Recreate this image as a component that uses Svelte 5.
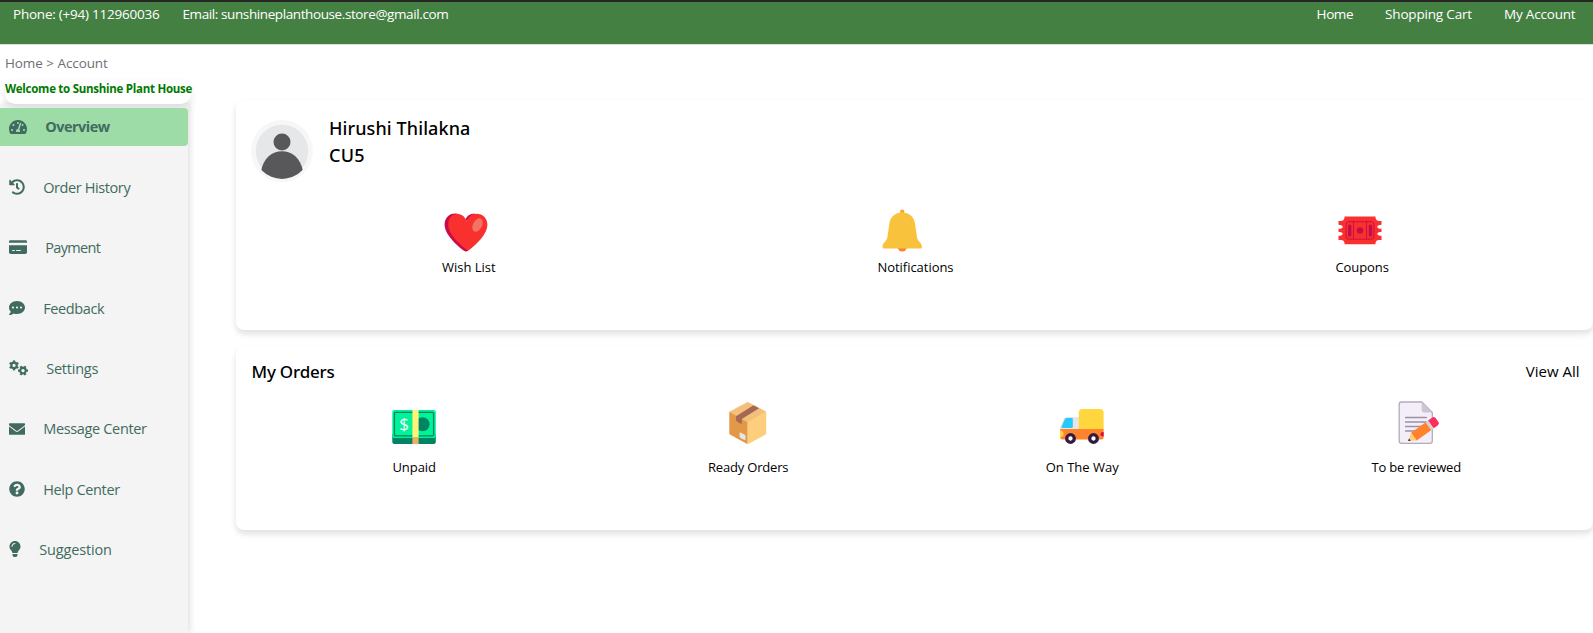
<script>
  const navItems = [
    { label: 'Overview', icon: 'gauge', width: 18, track: -0.51, active: true },
    { label: 'Order History', icon: 'history', width: 16, track: -0.4 },
    { label: 'Payment', icon: 'card', width: 18, track: -0.66 },
    { label: 'Feedback', icon: 'comment', width: 16, track: -0.39 },
    { label: 'Settings', icon: 'gears', width: 19, track: -0.22 },
    { label: 'Message Center', icon: 'mail', width: 16, track: -0.34 },
    { label: 'Help Center', icon: 'help', width: 16, track: -0.36 },
    { label: 'Suggestion', icon: 'bulb', width: 12, track: -0.15 }
  ];

  const shortcuts = [
    { label: 'Wish List', icon: 'heart', track: -0.02 },
    { label: 'Notifications', icon: 'bell', track: -0.04 },
    { label: 'Coupons', icon: 'coupon', track: -0.06 }
  ];

  const orders = [
    { label: 'Unpaid', icon: 'cash', track: -0.05 },
    { label: 'Ready Orders', icon: 'box', track: -0.18 },
    { label: 'On The Way', icon: 'truck', track: 0 },
    { label: 'To be reviewed', icon: 'memo', track: -0.18 }
  ];

  const glyphs = {
    gauge: {
      box: '0 0 576 512',
      d: 'M288 32C128.94 32 0 160.94 0 320c0 52.8 14.25 102.26 39.06 144.8 5.61 9.62 16.3 15.2 27.44 15.2h443c11.14 0 21.83-5.58 27.44-15.2C561.75 422.26 576 372.8 576 320c0-159.06-128.94-288-288-288zm0 64c14.71 0 26.58 10.13 30.32 23.65-1.11 2.26-2.64 4.23-3.45 6.67l-9.22 27.67c-5.13 3.49-10.97 6.01-17.64 6.01-17.67 0-32-14.33-32-32S270.33 96 288 96zM96 384c-17.67 0-32-14.33-32-32s14.33-32 32-32 32 14.33 32 32-14.33 32-32 32zm48-160c-17.67 0-32-14.33-32-32s14.33-32 32-32 32 14.33 32 32-14.33 32-32 32zm246.77-72.41l-61.33 184C343.13 347.33 352 364.54 352 384c0 11.72-3.38 22.55-8.88 32H232.88c-5.5-9.45-8.88-20.28-8.88-32 0-33.94 26.5-61.43 59.9-63.59l61.34-184.01c4.17-12.56 17.73-19.45 30.36-15.17 12.57 4.19 19.35 17.79 15.17 30.36zm14.66 57.2l15.52-46.55c3.47-1.29 7.13-2.23 11.05-2.23 17.67 0 32 14.33 32 32s-14.33 32-32 32c-11.38-.01-20.89-6.28-26.57-15.22zM480 384c-17.67 0-32-14.33-32-32s14.33-32 32-32 32 14.33 32 32-14.33 32-32 32z'
    },
    history: {
      box: '0 0 512 512',
      d: 'M504 255.531c.253 136.64-111.18 248.372-247.82 248.468-59.015.042-113.223-20.53-155.822-54.911-11.077-8.94-11.905-25.541-1.839-35.607l11.267-11.267c8.609-8.609 22.353-9.551 31.891-1.984C173.062 425.135 212.781 440 256 440c101.705 0 184-82.311 184-184 0-101.705-82.311-184-184-184-48.814 0-93.149 18.969-126.068 49.932l50.754 50.754c10.08 10.08 2.941 27.314-11.313 27.314H24c-8.837 0-16-7.163-16-16V38.627c0-14.254 17.234-21.393 27.314-11.314l49.372 49.372C129.209 34.136 189.552 8 256 8c136.81 0 247.747 110.78 248 247.531zm-180.912 78.784l9.823-12.63c8.138-10.463 6.253-25.542-4.21-33.679L288 256.349V152c0-13.255-10.745-24-24-24h-16c-13.255 0-24 10.745-24 24v135.651l65.409 50.874c10.463 8.137 25.541 6.253 33.679-4.21z'
    },
    card: {
      box: '0 0 576 512',
      d: 'M48 36C22 36 0 54 0 76v44H576V76c0-22-22-40-48-40H48zM576 196H0V424c0 31 25 56 56 56H520c31 0 56-25 56-56V196zM112 352h64c8.8 0 16 7.2 16 16s-7.2 16-16 16H112c-8.8 0-16-7.2-16-16s7.2-16 16-16zm112 16c0-8.8 7.2-16 16-16H368c8.8 0 16 7.2 16 16s-7.2 16-16 16H240c-8.8 0-16-7.2-16-16z'
    },
    comment: {
      box: '0 0 512 512',
      d: 'M256 32C114.6 32 0 125.1 0 240c0 49.6 21.4 95 57 130.7C44.5 421.1 2.7 466 2.2 466.5c-2.2 2.3-2.8 5.7-1.5 8.7S4.8 480 8 480c66.3 0 116-31.8 140.6-51.4 32.7 12.3 69 19.4 107.4 19.4 141.4 0 256-93.1 256-208S397.4 32 256 32zM128 272c-17.7 0-32-14.3-32-32s14.3-32 32-32 32 14.3 32 32-14.3 32-32 32zm128 0c-17.7 0-32-14.3-32-32s14.3-32 32-32 32 14.3 32 32-14.3 32-32 32zm128 0c-17.7 0-32-14.3-32-32s14.3-32 32-32 32 14.3 32 32-14.3 32-32 32z'
    },
    mail: {
      box: '0 0 512 512',
      d: 'M20 72Q0 72 0 92v28c0 12 7 22 19.2 30.400L236.800 313.600c11.400 8.500 27 8.500 38.400 0L492.800 150.400C505 142 512 132 512 120V92q0-20-20-20H20zM0 176V420q0 20 20 20H492q20 0 20-20V176L294.400 339.200c-22.800 17.100-54 17.100-76.800 0L0 176z'
    },
    help: {
      box: '0 0 512 512',
      d: 'M504 256c0 136.997-111.043 248-248 248S8 392.997 8 256C8 119.083 119.043 8 256 8s248 111.083 248 248zM262.655 90c-54.497 0-89.255 22.957-116.549 63.758-3.536 5.286-2.353 12.415 2.715 16.258l34.699 26.31c5.205 3.947 12.621 3.008 16.665-2.122 17.864-22.658 30.113-35.797 57.303-35.797 20.429 0 45.698 13.148 45.698 32.958 0 14.976-12.363 22.667-32.534 33.976C247.128 238.528 216 254.941 216 296v4c0 6.627 5.373 12 12 12h56c6.627 0 12-5.373 12-12v-1.333c0-28.462 83.186-29.647 83.186-106.667 0-58.002-60.165-102-116.531-102zM256 338c-25.365 0-46 20.635-46 46 0 25.364 20.635 46 46 46s46-20.636 46-46c0-25.365-20.635-46-46-46z'
    },
    bulb: {
      box: '-16 0 384 512',
      d: 'M96.06 454.35c.01 6.29 1.87 12.45 5.36 17.69l17.09 25.69a31.99 31.99 0 0 0 26.64 14.28h61.71a31.99 31.99 0 0 0 26.64-14.28l17.09-25.69a31.989 31.989 0 0 0 5.36-17.69l.04-38.35H96.01l.05 38.35zM0 176c0 44.37 16.45 84.85 43.56 115.78 16.52 18.85 42.36 58.23 52.21 91.45.04.26.07.52.11.78h160.24c.04-.26.07-.51.11-.78 9.85-33.22 35.69-72.6 52.21-91.45C335.55 260.85 352 220.37 352 176 352 78.61 272.91-.3 175.45 0 73.44.31 0 82.97 0 176zm176-80c-44.11 0-80 35.89-80 80 0 8.84-7.16 16-16 16s-16-7.16-16-16c0-61.76 50.24-112 112-112 8.84 0 16 7.16 16 16s-7.16 16-16 16z'
    }
  };
</script>

{#snippet gear(cx, cy, turn)}
  <g transform="translate({cx} {cy}) rotate({turn})" fill="none" stroke="currentColor">
    <circle r="2.7" stroke-width="2.2" />
    {#each [0, 60, 120, 180, 240, 300] as a}
      <path d="M0-3.4V-5" stroke-width="2.2" transform="rotate({a})" />
    {/each}
  </g>
{/snippet}

{#snippet navIcon(item)}
  {#if item.icon === 'gears'}
    <svg width="19" height="16" viewBox="0 0 19 16">
      {@render gear(5, 5.4, 0)}
      {@render gear(14, 10.6, 30)}
    </svg>
  {:else}
    <svg width={item.width} height="16" viewBox={glyphs[item.icon].box}>
      <path fill="currentColor" d={glyphs[item.icon].d} />
    </svg>
  {/if}
{/snippet}

{#snippet picture(name)}
  <svg class="picture" width="46" height="46" viewBox="0 0 46 46">
    {#if name === 'heart'}
      <path fill="#ca0b4a" d="M21.5 10.5C18.5 6.8 15.5 5.4 12 5.4 6 5.4 1.6 10.2 1.6 16.5c0 10 12 20.8 19.4 26.3 1.2.9 2.8.9 4 0L28 30z" />
      <path fill="#ca0b4a" d="M22.300 13C22.500 8.500 27 5.400 32 5.400l-4 6z" />
      <path fill="#f8312f" d="M23.800 13.500C25.500 8.500 29.300 5.800 33.600 5.800c6.200 0 10.800 4.600 10.800 10.900 0 9.300-10.400 19.300-19.400 26.100C15.500 35.400 5.200 26 5.200 16.500 5.200 10.500 9 6.100 14 6.100c4.500 0 8 2.400 9.800 7.400z" />
      <ellipse cx="34.500" cy="17" rx="4.500" ry="7.200" fill="#f37366" transform="rotate(27 34.500 17)" />
    {:else if name === 'bell'}
      <circle cx="23.200" cy="39" r="4.500" fill="#ff822d" />
      <circle cx="23.200" cy="3.600" r="2.200" fill="#f9a72a" />
      <path fill="#f9c23c" d="M23.200 4.500c-7.400 0-12.200 4.800-13 12L8.500 28.500c-.4 2.300-.8 3.600-2.300 5.100-1.700 1.700-2.700 3-2.700 5.400 0 1 .6 1.600 1.600 1.600h36.200c1 0 1.600-.6 1.600-1.600 0-2.400-1-3.700-2.700-5.400-1.500-1.500-1.900-2.800-2.300-5.100l-1.700-12c-.8-7.200-5.600-12-13-12z" />
    {:else if name === 'coupon'}
      <path fill="#f8312f" d="M7.5 8.500h31v1.500q.5 2.800 3 3h3v3.800c-3 0-4.200 1-4.200 2.200s1.500 1.700 4.200 1.800v3.200c-3 0-4.200.6-4.200 1.700s1.500 2 4.200 2.100V32h-3q-2.500.2-3 2.700v1.500h-31v-1.500Q7 32.200 4.500 32h-3v-4.200c3 0 4.200-1 4.200-2.100s-1.500-1.700-4.200-1.700v-3.200c3 0 4.200-.6 4.200-1.800S4.500 16.800 1.500 16.800V13h3q2.500-.2 3-3z" />
      <g fill="none" stroke="#ca0b4a" stroke-width=".9"><rect x="9" y="13.700" width="28" height="17.500" rx="3" /><path d="M16.500 13.500v17.700M29.500 13.500v17.700" /></g>
      <g fill="#ca0b4a"><rect x="11" y="16.500" width="3.400" height="12" rx="1.500" /><rect x="31.800" y="16.500" width="3.400" height="12" rx="1.500" /><circle cx="23" cy="22.500" r="3.200" /></g>
    {:else if name === 'cash'}
      <path fill="#008463" d="M1.300 34h43.500v8q0 2-2 2H3.300q-2 0-2-2z" />
      <rect x="1.300" y="10" width="43.500" height="28" rx="2" fill="#00f397" />
      <rect x="3.400" y="12.400" width="39.200" height="23.400" rx="1" fill="none" stroke="#008463" stroke-width="1.300" />
      <circle cx="31.500" cy="24.200" r="7" fill="#008463" />
      <path fill="#fff478" d="M21.400 10h6.200v27.500h-6.200z" /><path fill="#f3ad61" d="M21.400 37.500h6.200V44h-6.200z" />
      <text x="13" y="30" class="dollar">$</text>
    {:else if name === 'box'}
      <path fill="#f3c07b" stroke="#f3c07b" stroke-width=".6" stroke-linejoin="round" d="M22.700 2.200L41 11.800 22.700 22.500 4.500 12z" />
      <path fill="#e39848" d="M4.300 11.700l18.400 10.600V44q-.8 0-1.500-.4L5.400 34.800q-1.100-.6-1.100-1.900z" />
      <path fill="#ffce7c" d="M41.200 11.700L22.700 22.300V44q.8 0 1.500-.4l15.900-8.800q1.100-.6 1.100-1.900z" />
      <path fill="#a56953" d="M11 16.200L28.500 5.300l5.600 2.900-17.300 10.700v4.700q-.3.500-.9.200L11.700 21.300q-.7-.4-.7-1z" />
      <path fill="#e6e6e6" d="M15.500 32.500l4 2.100q1 .5 1 1.600v3.200q-.3.800-1 .5l-4-2q-.9-.5-.9-1.500V33q.2-.8.900-.5z" />
    {:else if name === 'truck'}
      <path fill="#e6e6e6" d="M7.500 17H21v14H1.200v-4L5 18.500Q5.800 17 7.500 17z" />
      <path fill="#26c9fc" d="M7.800 18h5q1 0 1 1v8q0 1-1 1H3.500q-1.400 0-.9-1.200l3.200-7.500Q6.400 18 7.800 18z" />
      <path fill="#ffd63d" d="M23.500 9h17.400q3.700 0 3.700 3.700V30H19.800V12.700Q19.800 9 23.500 9z" />
      <path fill="#ff822d" d="M1.200 29h43.400v8q0 2.500-2.500 2.500H3.500Q1.200 39.500 1.200 37z" />
      <path fill="#ffd048" d="M1 30.500q3.600.4 3.600 3.400T1 37.300z" />
      <path fill="#d3093f" d="M44.600 32c-2 0-3 .9-3 2.200s1 2.200 3 2.200z" />
      <g fill="#fff" stroke="#321b41" stroke-width="3.300"><circle cx="11.500" cy="38.500" r="3.800" /><circle cx="34.500" cy="38.500" r="3.800" /></g>
    {:else}
      <path fill="#f3eef8" stroke="#b4acbc" stroke-width="1.300" d="M8.300 2h20.500L39.300 12.500V41q0 2.400-2.400 2.400H8.300Q6.200 43.400 6.200 41V4.200Q6.200 2 8.300 2z" />
      <path fill="#cdc4d6" d="M28.700 2l10.600 10.600h-8.200q-2.400 0-2.400-2.400z" />
      <path stroke="#9b90a5" stroke-width="1.300" stroke-linecap="round" d="M12.500 17.500h20.800M12.500 22h20.800M12.500 26.500h18M12.500 31h15" />
      <g transform="translate(15.300 40.800) rotate(-36)">
        <path fill="#ffce7c" d="M0 0L7-4.800v9.600z" /><path fill="#402a32" d="M-.4 0l2.400-1.500v3z" />
        <path fill="#ff822d" d="M7-4.800h18v9.600H7z" /><path fill="#d3d3d3" d="M25-4.800h3v9.600h-3z" /><path fill="#f92f60" d="M28-4.800h4.800q2.700 0 2.700 2.700v4.200q0 2.700-2.700 2.700H28z" />
      </g>
    {/if}
  </svg>
{/snippet}

<div class="page">
  <header>
    <div class="contact">
      <span class="phone">Phone: (+94) 112960036</span>
      <span class="email">Email: sunshineplanthouse.store@gmail.com</span>
    </div>
    <nav>
      <a class="home">Home</a>
      <a>Shopping Cart</a>
      <a>My Account</a>
    </nav>
  </header>

  <div class="layout">
    <div class="side">
      <div class="crumbs">Home &gt; Account</div>
      <div class="welcome">Welcome to Sunshine Plant House</div>
      <aside>
        {#each navItems as item}
          <div class="nav-item" class:active={item.active}>
            {@render navIcon(item)}
            <span style="letter-spacing: {item.track}px">{item.label}</span>
          </div>
        {/each}
      </aside>
    </div>

    <main>
      <section class="card profile">
        <div class="user">
          <svg class="avatar" width="62" height="62" viewBox="0 0 62 62">
            <defs><clipPath id="face"><circle cx="31" cy="31" r="28" /></clipPath></defs>
            <circle cx="31" cy="31" r="31" fill="#f7f7f8" />
            <circle cx="31" cy="31" r="26.300" fill="#e6e7e9" />
            <circle cx="31" cy="22" r="8.500" fill="#58585a" />
            <path clip-path="url(#face)" fill="#58585a" d="M10 62V51C12.500 38 21 31.200 31 31.200S49.500 38 52 51v11z" />
          </svg>
          <div class="name">
            <div>Hirushi Thilakna</div>
            <div class="code">CU5</div>
          </div>
        </div>
        <div class="shortcuts">
          {#each shortcuts as s}
            <div class="tile">
              <div class="inner">
                {@render picture(s.icon)}
                <span style="letter-spacing: {s.track}px">{s.label}</span>
              </div>
            </div>
          {/each}
        </div>
      </section>

      <section class="card orders">
        <div class="head">
          <h2>My Orders</h2>
          <a class="all">View All</a>
        </div>
        <div class="statuses">
          {#each orders as o}
            <div class="tile">
              {@render picture(o.icon)}
              <span style="letter-spacing: {o.track}px">{o.label}</span>
            </div>
          {/each}
        </div>
      </section>
    </main>
  </div>
</div>

<style>
  :global(body) {
    overflow: hidden;
    background: #fff;
  }
  .page {
    box-sizing: border-box;
    display: flex;
    flex-direction: column;
    height: 633px;
    font-family: 'Open Sans', 'Noto Sans', sans-serif;
    color: #000;
    white-space: nowrap;
  }
  svg {
    display: block;
    flex: none;
  }
  header {
    box-sizing: border-box;
    display: flex;
    justify-content: space-between;
    flex: none;
    height: 45px;
    padding: 2px 17.5px 0 13px;
    border-top: 2px solid #262626;
    border-bottom: 1px solid #dcdfdc;
    background: #458043;
    color: #fff;
    font-size: 13.5px;
    line-height: 20px;
    letter-spacing: -0.18px;
  }
  .contact {
    display: flex;
    gap: 23px;
  }
  .phone {
    letter-spacing: -0.23px;
  }
  .email {
    letter-spacing: -0.4px;
  }
  nav {
    display: flex;
    gap: 32px;
  }
  .home {
    letter-spacing: -0.42px;
  }
  .layout {
    display: flex;
    flex: 1;
    min-height: 0;
  }
  .side {
    display: flex;
    flex-direction: column;
    flex: none;
    width: 192px;
  }
  .crumbs {
    height: 35px;
    padding-left: 5px;
    box-sizing: border-box;
    font-size: 13.5px;
    line-height: 36px;
    letter-spacing: -0.13px;
    word-spacing: 0.3px;
    color: #6f6f75;
  }
  .welcome {
    position: relative;
    z-index: 1;
    height: 24px;
    margin: 0 1px 0 5px;
    border-radius: 10px;
    background: #fff;
    box-shadow: 0 4px 8px rgba(0, 0, 0, 0.1);
    color: #007a00;
    font-size: 11.5px;
    font-weight: 700;
    line-height: 17px;
    letter-spacing: -0.27px;
  }
  aside {
    display: flex;
    flex-direction: column;
    flex: 1;
    gap: 22.4px;
    width: 188px;
    padding-top: 4px;
    background: #f4f4f4;
    box-shadow: 2px 0 6px rgba(0, 0, 0, 0.13);
    color: #416b60;
  }
  .nav-item {
    display: flex;
    align-items: center;
    gap: 18.2px;
    flex: none;
    height: 38px;
    padding-left: 9px;
    border-radius: 0 4px 4px 0;
    font-size: 14.5px;
  }
  .nav-item svg {
    margin-bottom: 0.8px;
  }
  .active {
    position: relative;
    z-index: 2;
    background: #9ddca6;
    font-weight: 700;
  }
  .active span {
    margin-bottom: 2px;
  }
  main {
    display: flex;
    flex-direction: column;
    gap: 16px;
    flex: 1;
    padding: 55px 0 0 44px;
  }
  .card {
    box-sizing: border-box;
    border-radius: 8px;
    background: #fff;
    box-shadow: 0 4px 6px rgba(0, 0, 0, 0.12);
  }
  .profile {
    height: 230px;
    padding-top: 14.5px;
  }
  .user {
    display: flex;
    gap: 16px;
    height: 67.5px;
    padding-left: 15px;
  }
  .avatar {
    margin-top: 5.5px;
  }
  .name,
  h2 {
    font-family: 'Noto Sans', sans-serif;
    font-weight: 500;
  }
  .name {
    font-size: 18px;
    line-height: 27px;
    letter-spacing: 0.1px;
  }
  .code {
    letter-spacing: 0.3px;
  }
  .shortcuts {
    display: grid;
    grid-template-columns: repeat(3, 1fr);
    width: 1340px;
    margin: 26px 0 0 9.5px;
  }
  .tile {
    display: flex;
    flex-direction: column;
    align-items: center;
    font-size: 13px;
    line-height: 20px;
  }
  .inner {
    display: flex;
    flex-direction: column;
    align-items: flex-start;
    gap: 3px;
  }
  .inner .picture {
    margin-left: 1.4px;
  }
  .orders {
    height: 184px;
    padding-top: 13px;
  }
  .head {
    display: flex;
    align-items: center;
    justify-content: space-between;
    height: 24px;
    padding: 0 13.5px 0 15.5px;
  }
  h2 {
    margin: 0;
    font-size: 17px;
    letter-spacing: -0.21px;
  }
  .all {
    margin-bottom: 1px;
    font-size: 15px;
  }
  .statuses {
    display: grid;
    grid-template-columns: repeat(4, 1fr);
    width: 1336px;
    margin: 17px 0 0 11.2px;
  }
  .statuses .tile {
    gap: 11px;
  }
  .statuses .picture {
    margin-right: 0.8px;
  }
  .dollar {
    fill: #fff;
    font: 17px 'Open Sans', sans-serif;
    text-anchor: middle;
  }
</style>
